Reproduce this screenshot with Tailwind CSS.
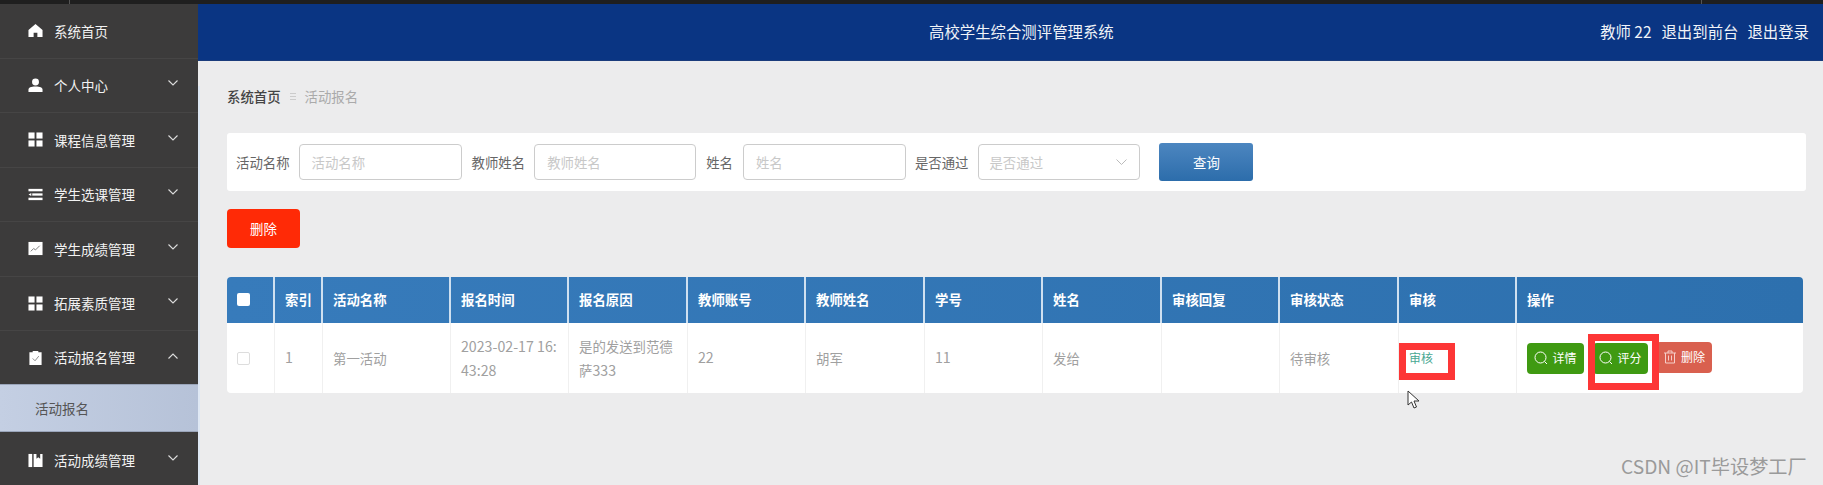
<!DOCTYPE html>
<html>
<head>
<meta charset="utf-8">
<script src="https://cdn.jsdelivr.net/npm/@tailwindcss/browser@4"></script>
<title>高校学生综合测评管理系统</title>
</head>
<body class="font-['Noto_Sans_CJK_SC','Noto_Sans',sans-serif] bg-[#ececed] overflow-hidden">
<div class="relative h-[485px] w-[1823px] overflow-hidden">
  <!-- top strip -->
  <div class="flex h-[4px] bg-[#1f1f1f]">
    <div class="w-[70px] border-r border-[#555]"></div>
    <div class="w-[1632px] border-r border-[#555]"></div>
  </div>

  <div class="flex h-[481px]">
    <!-- sidebar -->
    <aside class="w-[198px] shrink-0 overflow-hidden bg-[#3c3b3b] text-[13.5px] text-[#f2f2f2]">
      <div class="flex h-[54.5px] items-center border-b border-[#464545] pl-[28px]">
        <svg class="w-[15px] h-[15px] mr-[11px]" viewBox="0 0 16 16" fill="#fff"><path d="M8 1 L15.5 7.5 V15 H10 V10.5 H6 V15 H.5 V7.5 Z"/></svg>
        <span>系统首页</span>
      </div>
      <div class="flex h-[54.5px] items-center border-b border-[#464545] pl-[28px] pr-[20px]">
        <svg class="w-[15px] h-[15px] mr-[11px]" viewBox="0 0 16 16" fill="#fff"><circle cx="8" cy="4.2" r="3.7"/><path d="M.5 15 V12.5 C.5 10 3 9 8 9 C13 9 15.5 10 15.5 12.5 V15 Z"/></svg>
        <span>个人中心</span>
        <svg class="ml-auto w-[10px] h-[6px] -mt-[4px]" viewBox="0 0 10 6" fill="none" stroke="#ddd" stroke-width="1.1"><path d="M.5 .5 L5 5 L9.5 .5"/></svg>
      </div>
      <div class="flex h-[54.5px] items-center border-b border-[#464545] pl-[28px] pr-[20px]">
        <svg class="w-[15px] h-[15px] mr-[11px]" viewBox="0 0 16 16" fill="#fff"><rect x=".5" y=".5" width="6.5" height="6.5"/><rect x="9" y=".5" width="6.5" height="6.5"/><rect x=".5" y="9" width="6.5" height="6.5"/><rect x="9" y="9" width="6.5" height="6.5"/></svg>
        <span>课程信息管理</span>
        <svg class="ml-auto w-[10px] h-[6px] -mt-[4px]" viewBox="0 0 10 6" fill="none" stroke="#ddd" stroke-width="1.1"><path d="M.5 .5 L5 5 L9.5 .5"/></svg>
      </div>
      <div class="flex h-[54.5px] items-center border-b border-[#464545] pl-[28px] pr-[20px]">
        <svg class="w-[15px] h-[15px] mr-[11px]" viewBox="0 0 16 16" fill="#fff"><rect x=".5" y="2" width="15" height="2.6"/><rect x="4.5" y="6.8" width="11" height="2.4"/><path d="M.5 8 L3.5 6.4 V9.6 Z"/><rect x=".5" y="11.4" width="15" height="2.6"/></svg>
        <span>学生选课管理</span>
        <svg class="ml-auto w-[10px] h-[6px] -mt-[4px]" viewBox="0 0 10 6" fill="none" stroke="#ddd" stroke-width="1.1"><path d="M.5 .5 L5 5 L9.5 .5"/></svg>
      </div>
      <div class="flex h-[54.5px] items-center border-b border-[#464545] pl-[28px] pr-[20px]">
        <svg class="w-[15px] h-[15px] mr-[11px]" viewBox="0 0 16 16"><rect x=".5" y="1" width="15" height="14" fill="#fff"/><path d="M3 11 L6 8 L8 9.5 L12.5 5" fill="none" stroke="#777" stroke-width="1"/></svg>
        <span>学生成绩管理</span>
        <svg class="ml-auto w-[10px] h-[6px] -mt-[4px]" viewBox="0 0 10 6" fill="none" stroke="#ddd" stroke-width="1.1"><path d="M.5 .5 L5 5 L9.5 .5"/></svg>
      </div>
      <div class="flex h-[54.5px] items-center border-b border-[#464545] pl-[28px] pr-[20px]">
        <svg class="w-[15px] h-[15px] mr-[11px]" viewBox="0 0 16 16" fill="#fff"><rect x=".5" y=".5" width="6.5" height="6.5"/><rect x="9" y=".5" width="6.5" height="6.5"/><rect x=".5" y="9" width="6.5" height="6.5"/><rect x="9" y="9" width="6.5" height="6.5"/></svg>
        <span>拓展素质管理</span>
        <svg class="ml-auto w-[10px] h-[6px] -mt-[4px]" viewBox="0 0 10 6" fill="none" stroke="#ddd" stroke-width="1.1"><path d="M.5 .5 L5 5 L9.5 .5"/></svg>
      </div>
      <div class="flex h-[53px] items-center pl-[28px] pr-[20px]">
        <svg class="w-[15px] h-[15px] mr-[11px]" viewBox="0 0 16 16"><path d="M1.5 2.5 H5 V1 H11 V2.5 H14.5 V16 H1.5 Z" fill="#fff"/><path d="M5 9 L7.5 11.5 L11.5 6.5" fill="none" stroke="#888" stroke-width="1"/></svg>
        <span>活动报名管理</span>
        <svg class="ml-auto w-[10px] h-[6px] -mt-[4px]" viewBox="0 0 10 6" fill="none" stroke="#ddd" stroke-width="1.1"><path d="M.5 5.5 L5 1 L9.5 5.5"/></svg>
      </div>
      <div class="flex h-[48px] items-center border-y border-[#9aa5ba] bg-gradient-to-r from-[#c4cfe3] to-[#b6c2d8] pl-[35px] text-[#555]">活动报名</div>
      <div class="flex h-[56px] items-center pl-[28px] pr-[20px]">
        <svg class="w-[15px] h-[15px] mr-[11px]" viewBox="0 0 16 16" fill="#fff"><path d="M.5 1 H4.5 V15 H.5 Z"/><path d="M6 1 V15 H15.5 V1 H13 V6 L11 4.5 L9 6 V1 Z"/></svg>
        <span>活动成绩管理</span>
        <svg class="ml-auto w-[10px] h-[6px] -mt-[4px]" viewBox="0 0 10 6" fill="none" stroke="#ddd" stroke-width="1.1"><path d="M.5 .5 L5 5 L9.5 .5"/></svg>
      </div>
    </aside>

    <div class="flex-1 min-w-0">
      <!-- header -->
      <header class="relative flex h-[57px] items-center justify-end border-b border-[#1a3c7c] bg-[#0a3583] pr-[14px] text-[15.4px] text-[#f0f3f8]">
        <div class="absolute left-[731px] top-[15px] leading-[24px]">高校学生综合测评管理系统</div>
        <span>教师 22</span>
        <span class="ml-[10px]">退出到前台</span>
        <span class="ml-[9px]">退出登录</span>
      </header>

      <main class="h-[424px] border-l-2 border-[#dfe8f4] pl-[27px] pr-[17px] text-[13.4px]">
        <!-- breadcrumb -->
        <div class="flex h-[20px] mt-[25px] items-center">
          <span class="font-medium text-[#444]">系统首页</span>
          <span class="mx-[9px] w-[6px] border-y border-[#ccc] h-[7px] bg-[linear-gradient(#ccc,#ccc)] bg-no-repeat bg-center bg-[length:100%_1px]"></span>
          <span class="text-[#aaa]">活动报名</span>
        </div>

        <!-- search -->
        <div class="mt-[27px] flex h-[58px] w-[1579px] items-center rounded-[3px] bg-white pl-[9px] text-[#666]">
          <label>活动名称</label>
          <div class="ml-[9px] flex h-[36px] w-[163px] items-center rounded-[4px] border border-[#ccc] pl-[12px] text-[#c8c8c8]">活动名称</div>
          <label class="ml-[10px]">教师姓名</label>
          <div class="ml-[9px] flex h-[36px] w-[162px] items-center rounded-[4px] border border-[#ccc] pl-[12px] text-[#c8c8c8]">教师姓名</div>
          <label class="ml-[10px]">姓名</label>
          <div class="ml-[10px] flex h-[36px] w-[163px] items-center rounded-[4px] border border-[#ccc] pl-[12px] text-[#c8c8c8]">姓名</div>
          <label class="ml-[9px]">是否通过</label>
          <div class="ml-[10px] flex h-[36px] w-[162px] items-center rounded-[4px] border border-[#ccc] pl-[10px] pr-[12px] text-[#c8c8c8]">
            <span>是否通过</span>
            <svg class="ml-auto w-[11px] h-[6px]" viewBox="0 0 11 6" fill="none" stroke="#bbb" stroke-width="1"><path d="M.5 .5 L5.5 5.5 L10.5 .5"/></svg>
          </div>
          <button class="ml-[19px] h-[38px] w-[94px] rounded-[3px] bg-gradient-to-b from-[#4c86c0] to-[#2c6dab] text-white">查询</button>
        </div>

        <button class="mt-[18px] block h-[39px] w-[73px] rounded-[4px] bg-[#ff2a06] text-white">删除</button>

        <!-- table -->
        <table class="mt-[29px] w-[1576px] table-fixed border-separate border-spacing-0 overflow-hidden rounded-[4px] bg-white text-left">
          <thead class="bg-gradient-to-r from-[#377bbb] to-[#2d70ae] text-white">
            <tr class="h-[46px]">
              <th class="w-[48px] border-r-2 border-[#cfe0f0] pl-[10px] pb-[2px] font-bold"><span class="block h-[13px] w-[13px] rounded-[2px] bg-white"></span></th>
              <th class="w-[48px] border-r-2 border-[#cfe0f0] pl-[10px] pb-[2px] font-bold">索引</th>
              <th class="w-[128px] border-r-2 border-[#cfe0f0] pl-[10px] pb-[2px] font-bold">活动名称</th>
              <th class="w-[118px] border-r-2 border-[#cfe0f0] pl-[10px] pb-[2px] font-bold">报名时间</th>
              <th class="w-[119px] border-r-2 border-[#cfe0f0] pl-[10px] pb-[2px] font-bold">报名原因</th>
              <th class="w-[118px] border-r-2 border-[#cfe0f0] pl-[10px] pb-[2px] font-bold">教师账号</th>
              <th class="w-[119px] border-r-2 border-[#cfe0f0] pl-[10px] pb-[2px] font-bold">教师姓名</th>
              <th class="w-[118px] border-r-2 border-[#cfe0f0] pl-[10px] pb-[2px] font-bold">学号</th>
              <th class="w-[119px] border-r-2 border-[#cfe0f0] pl-[10px] pb-[2px] font-bold">姓名</th>
              <th class="w-[118px] border-r-2 border-[#cfe0f0] pl-[10px] pb-[2px] font-bold">审核回复</th>
              <th class="w-[119px] border-r-2 border-[#cfe0f0] pl-[10px] pb-[2px] font-bold">审核状态</th>
              <th class="w-[118px] border-r-2 border-[#cfe0f0] pl-[10px] pb-[2px] font-bold">审核</th>
              <th class="pl-[10px] pb-[2px] font-bold">操作</th>
            </tr>
          </thead>
          <tbody class="text-[#a0a0a0]">
            <tr class="h-[70px]">
              <td class="border-r border-[#f0f0f0] pl-[10px]"><span class="block h-[13px] w-[13px] rounded-[2px] border border-[#ddd]"></span></td>
              <td class="border-r border-[#f0f0f0] pl-[10px] text-[14.2px]">1</td>
              <td class="border-r border-[#f0f0f0] pl-[10px]">第一活动</td>
              <td class="border-r border-[#f0f0f0] pl-[10px] text-[14.2px] leading-[24px]">2023-02-17 16:<br>43:28</td>
              <td class="border-r border-[#f0f0f0] pl-[10px] leading-[24px]">是的发送到范德<br><span>萨<span class="text-[14.2px]">333</span></span></td>
              <td class="border-r border-[#f0f0f0] pl-[10px] text-[14.2px]">22</td>
              <td class="border-r border-[#f0f0f0] pl-[10px]">胡军</td>
              <td class="border-r border-[#f0f0f0] pl-[10px] text-[14.2px]">11</td>
              <td class="border-r border-[#f0f0f0] pl-[10px]">发给</td>
              <td class="border-r border-[#f0f0f0] pl-[10px]"></td>
              <td class="border-r border-[#f0f0f0] pl-[10px]">待审核</td>
              <td class="border-r border-[#f0f0f0] pl-[10px] text-[12px] text-[#4aa893]">审核</td>
              <td class="pl-[10px]">
                <div class="flex items-center text-[12px] text-white">
                  <span class="flex h-[31px] w-[57px] items-center justify-center gap-[4px] rounded-[4px] bg-[#3f9a12]">
                    <svg class="h-[14px] w-[14px]" viewBox="0 0 14 14" fill="none" stroke="#fff" stroke-width="1"><circle cx="6.5" cy="6.5" r="5.5"/><path d="M10.5 10.5 L13 13"/></svg>详情
                  </span>
                  <span class="ml-[9px] flex h-[31px] w-[55px] items-center justify-center gap-[4px] rounded-[4px] bg-[#3f9a12]">
                    <svg class="h-[14px] w-[14px]" viewBox="0 0 14 14" fill="none" stroke="#fff" stroke-width="1"><circle cx="6.5" cy="6.5" r="5.5"/><path d="M10.5 10.5 L13 13"/></svg>评分
                  </span>
                  <span class="ml-[8px] flex h-[31px] w-[56px] -translate-y-[1px] items-center justify-center gap-[4px] rounded-[4px] bg-[#d9604f]">
                    <svg class="h-[14px] w-[14px]" viewBox="0 0 14 14" fill="none" stroke="#f5cfc9" stroke-width="1"><path d="M1 3 H13 M5 3 V1 H9 V3 M2.5 3 V13 H11.5 V3 M5.5 5.5 V10.5 M8.5 5.5 V10.5"/></svg>删除
                  </span>
                </div>
              </td>
            </tr>
          </tbody>
        </table>
      </main>
    </div>
  </div>

  <!-- red annotation boxes drawn over the capture -->
  <div class="absolute left-[1399px] top-[343px] h-[37px] w-[56px] border-[7px] border-[#fd3636]"></div>
  <div class="absolute left-[1588px] top-[334px] h-[56px] w-[71px] border-[7px] border-[#fd3636]"></div>

  <!-- mouse cursor -->
  <svg class="absolute left-[1407px] top-[390px] h-[19px] w-[13px]" viewBox="0 0 13 19"><path d="M1 1 V15 L4.5 12 L7 18 L9.5 17 L7 11 L12 11 Z" fill="#fff" stroke="#333" stroke-width="1"/></svg>

  <!-- watermark -->
  <div class="absolute left-[1621px] top-[453px] text-[19.2px] leading-[26px] text-[#9a9a9a]">CSDN @IT毕设梦工厂</div>
</div>
</body>
</html>
